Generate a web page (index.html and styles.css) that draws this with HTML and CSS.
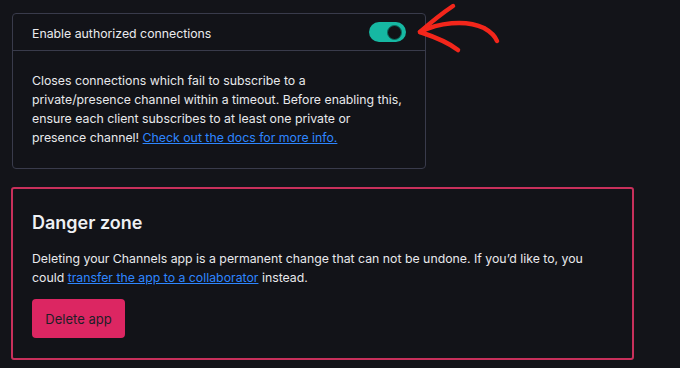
FILE: index.html
```html
<!DOCTYPE html>
<html>
<head>
<meta charset="utf-8">
<link rel="stylesheet" href="styles.css">
</head>
<body>
<div class="page">
  <section class="card">
    <div class="card-head">
      <span class="card-title">Enable authorized connections</span>
      <span class="toggle"><span class="knob"></span></span>
    </div>
    <div class="card-body">
      <p>Closes connections which fail to subscribe to a private/presence channel within a timeout. Before enabling this, ensure each client subscribes to at least one private or presence channel! <a href="#">Check out the docs for more info.</a></p>
    </div>
  </section>
  <section class="danger">
    <h2>Danger zone</h2>
    <p>Deleting your Channels app is a permanent change that can not be undone. If you’d like to, you could <a href="#">transfer the app to a collaborator</a> instead.</p>
    <button class="btn-delete">Delete app</button>
  </section>
  <svg class="arrow" width="100" height="60" viewBox="0 0 100 60">
    <path d="M10 32 C 28 23, 55 19, 74 28 C 81 32, 85 36, 87 41" fill="none" stroke="#f3261b" stroke-width="4.5" stroke-linecap="round"/>
    <path d="M43 6 C 31 14, 19 24, 10 32 C 22 36, 38 42, 48 50" fill="none" stroke="#f3261b" stroke-width="4.5" stroke-linecap="round" stroke-linejoin="round"/>
  </svg>
</div>
</body>
</html>
```

FILE: styles.css
```css
html, body {
  margin: 0;
  padding: 0;
  background: #131419;
}
body {
  font-family: Inter, "Noto Sans", sans-serif;
  color: #e8e9ec;
  font-size: 12.3px;
}
.page {
  position: relative;
  width: 680px;
  height: 368px;
  padding-top: 13px;
  box-sizing: border-box;
}
.card {
  margin-left: 12px;
  width: 414px;
  box-sizing: border-box;
  border: 1px solid #393b4b;
  border-radius: 4px;
  background: #121318;
}
.card-head {
  display: flex;
  align-items: center;
  justify-content: space-between;
  height: 36px;
  padding: 0 19px 0 19px;
  border-bottom: 1px solid #393b4b;
}
.card-title {
  font-size: 12.3px;
  color: #eaebee;
  margin-top: 3px;
}
.toggle {
  position: relative;
  width: 37px;
  height: 20px;
  border-radius: 10px;
  background: #16b8a2;
  margin-top: 0;
}
.knob {
  position: absolute;
  right: 4px;
  top: 3px;
  width: 13px;
  height: 13px;
  border-radius: 50%;
  background: #111216;
  border: 0.5px solid #0a6b5e;
}
.card-body {
  padding: 20px 19px 21px 19px;
}
.card-body p {
  margin: 0;
  line-height: 19px;
}
a {
  color: #2e86ff;
  text-decoration: underline;
}
.danger {
  margin-top: 18px;
  margin-left: 11px;
  width: 623px;
  box-sizing: border-box;
  border: 2px solid #c8305b;
  border-radius: 3px;
  padding: 22px 19px 20px 19px;
  background: #121318;
}
.danger h2 {
  margin: 0;
  font-size: 18px;
  font-weight: 600;
  line-height: 24px;
  color: #eef0f3;
}
.danger p {
  margin: 14px 0 0 0;
  line-height: 19px;
}
.btn-delete {
  display: block;
  margin-top: 12px;
  width: 93px;
  height: 39px;
  border: none;
  border-radius: 4px;
  background: #dc2662;
  color: #1d1f27;
  font-family: Inter, "Noto Sans", sans-serif;
  font-size: 13px;
  padding: 0;
}
.arrow {
  position: absolute;
  left: 410px;
  top: 0;
}
```
